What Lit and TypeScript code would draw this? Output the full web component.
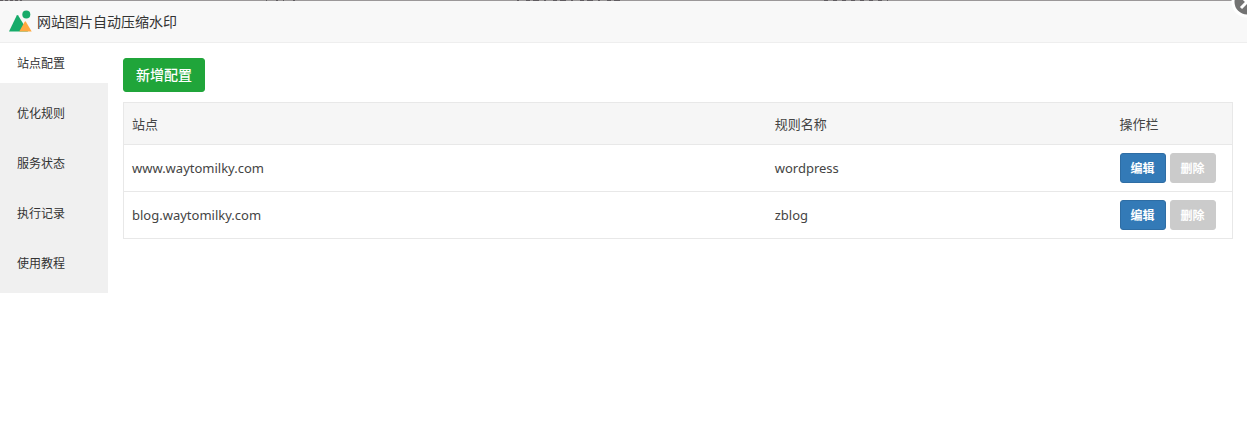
import { LitElement, html, css, svg } from "lit";
import { customElement, state } from "lit/decorators.js";

interface Site {
  host: string;
  rule: string;
}

const backdropMarks: [number, number, string][] = [
  [0, 22, "3 2"],
  [266, 30, "1 9 2 5"],
  [517, 108, "2 7 4 3 6 5"],
  [824, 64, "4 5"],
];

@customElement("app-root")
export class AppRoot extends LitElement {
  static styles = css`
    :host {
      display: block;
      min-height: 100vh;
      background: #fff;
      color: #444;
      font-family: "Noto Sans", "Noto Sans CJK SC", sans-serif;
      font-size: 13px;
      line-height: 20px;
      overflow: hidden;
      position: relative;
    }
    .backdrop {
      display: block;
      width: 100%;
      height: 1px;
      background: #9b9899;
    }
    .close {
      position: absolute;
      top: -14px;
      right: -16px;
      width: 32px;
      height: 32px;
      padding: 0;
      border: 0;
      background: none;
    }
    .close svg {
      display: block;
    }
    .title {
      display: flex;
      align-items: center;
      gap: 4px;
      height: 41px;
      padding: 0 8px;
      border-bottom: 1px solid #eee;
      background: #f8f8f8;
    }
    h1 {
      margin: 0;
      font-size: 14px;
      font-weight: 400;
      color: #333;
    }
    .body {
      display: flex;
      align-items: flex-start;
    }
    nav {
      width: 108px;
      flex: none;
      background: #f0f0f0;
    }
    .tab {
      display: block;
      width: 100%;
      height: 40px;
      margin: 0 0 10px;
      padding: 2px 0 0 17px;
      border: 0;
      background: none;
      color: #333;
      font: inherit;
      font-size: 12px;
      text-align: left;
    }
    .tab.on {
      background: #fff;
    }
    main {
      flex: 1;
      min-width: 0;
      padding: 15px 14px 15px 15px;
    }
    .btn {
      border: 1px solid;
      border-radius: 3px;
      color: #fff;
      font: inherit;
      font-weight: 500;
    }
    .add {
      display: block;
      height: 34px;
      padding: 0 12px;
      margin-bottom: 10px;
      border-color: #20a53a;
      background: #20a53a;
      font-size: 14px;
    }
    .small {
      height: 30px;
      padding: 2px 10px 0;
      font-size: 12px;
      font-weight: 700;
    }
    .edit {
      border-color: #2e6da4;
      background: #337ab7;
    }
    .remove {
      border-color: #cbcbcb;
      background: #cbcbcb;
    }
    table {
      width: 100%;
      table-layout: fixed;
      border-collapse: collapse;
      border: 1px solid #e8e8e8;
    }
    .c-host {
      width: 58%;
    }
    .c-ops {
      width: 121px;
    }
    th {
      height: 41px;
      padding: 0 8px;
      background: #f6f6f6;
      font-weight: 400;
      text-align: left;
    }
    td {
      height: 46px;
      padding: 0 8px;
      border-top: 1px solid #e8e8e8;
    }
    .actions {
      display: flex;
      gap: 4px;
    }
  `;

  @state() private tab = 0;

  private tabs = ["站点配置", "优化规则", "服务状态", "执行记录", "使用教程"];

  private sites: Site[] = [
    { host: "www.waytomilky.com", rule: "wordpress" },
    { host: "blog.waytomilky.com", rule: "zblog" },
  ];

  render() {
    return html`
      <svg class="backdrop" aria-hidden="true">
        ${backdropMarks.map(
          ([x, w, dash]) => svg`<line x1=${x} x2=${x + w} y1="0.5" y2="0.5"
            stroke="#5f5b5f" stroke-dasharray=${dash}></line>`
        )}
      </svg>
      <header class="title">
        <svg width="25" height="25" viewBox="0 0 25 25" aria-hidden="true">
          <path d="M1 22.500L8.700 6.600Q9.400 5.500 10.200 6.600L20 22.500Z" fill="#17ab6a" />
          <circle cx="18.300" cy="5.500" r="4" fill="#17ab6a" />
          <path d="M11.200 22.500L16.700 12.800Q17.300 11.800 17.900 12.800L23.700 22.500Z" fill="#ffa940" />
        </svg>
        <h1>网站图片自动压缩水印</h1>
      </header>
      <div class="body">
        <nav>
          ${this.tabs.map(
            (t, i) => html`<button
              class="tab ${i === this.tab ? "on" : ""}"
              @click=${() => (this.tab = i)}
            >${t}</button>`
          )}
        </nav>
        <main>
          <button class="btn add">新增配置</button>
          <table>
            <colgroup>
              <col class="c-host" />
              <col />
              <col class="c-ops" />
            </colgroup>
            <thead>
              <tr>
                <th scope="col">站点</th>
                <th scope="col">规则名称</th>
                <th scope="col">操作栏</th>
              </tr>
            </thead>
            <tbody>
              ${this.sites.map(
                (s) => html`<tr>
                  <td>${s.host}</td>
                  <td>${s.rule}</td>
                  <td>
                    <div class="actions">
                      <button class="btn small edit">编辑</button>
                      <button class="btn small remove">删除</button>
                    </div>
                  </td>
                </tr>`
              )}
            </tbody>
          </table>
        </main>
      </div>
      <button class="close" aria-label="关闭">
        <svg width="32" height="32" viewBox="0 0 32 32" aria-hidden="true">
          <circle cx="16" cy="16" r="14" fill="#737373" stroke="#fff" stroke-width="3" />
          <path d="M10 10L22 22M22 10L10 22" stroke="#fff" stroke-width="3" />
        </svg>
      </button>
    `;
  }
}
